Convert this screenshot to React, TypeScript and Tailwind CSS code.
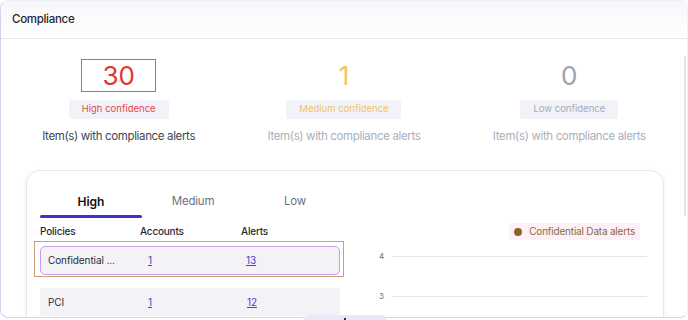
import React from "react";

const stats = [
  { n: "30", label: "High confidence", numCls: "text-[#e2352f]", boxed: true, badgeCls: "text-[#e8474a] w-[100px]", capCls: "text-[#3d4657]" },
  { n: "1", label: "Medium confidence", numCls: "text-[#f2c55c]", boxed: false, badgeCls: "text-[#eec46a] w-[115px]", capCls: "text-[#a9b0bc]" },
  { n: "0", label: "Low confidence", numCls: "text-[#9aa3b2]", boxed: false, badgeCls: "text-[#a3abb8] w-[98px]", capCls: "text-[#a9b0bc]" },
];

export default function App() {
  return (
    <div className="relative w-[688px] h-[320px] overflow-hidden bg-white" style={{ fontFamily: "Inter, 'Noto Sans', sans-serif" }}>
      <div className="relative h-[318px] rounded-[8px] border border-[#d6d2f0] border-t-[#efeef6] border-r-[#f1f1f5] bg-white overflow-hidden">
        <div className="h-[38px] flex items-center px-[11px] border-b border-[#e4e6eb] bg-gradient-to-b from-[#f7f7fa] to-white">
          <span className="text-[11.5px] tracking-[-0.3px] font-medium text-[#1f2430]">Compliance</span>
        </div>
        <div className="grid grid-cols-3 px-[5px] pt-[20px]">
          {stats.map((s) => (
            <div key={s.label} className="flex flex-col items-center">
              {s.boxed ? (
                <div className="h-[33px] w-[75px] p-px bg-[#f2505d]">
                  <div className="h-full w-full bg-white flex items-center justify-center">
                    <span className={"text-[26px] leading-none " + s.numCls}>{s.n}</span>
                  </div>
                </div>
              ) : (
                <div className="h-[33px] w-[75px] flex items-center justify-center">
                  <span className={"text-[26px] leading-none " + s.numCls}>{s.n}</span>
                </div>
              )}
              <div className={"mt-[8px] h-[19px] flex items-center justify-center bg-[#f1f3f8] rounded-[2px] text-[9.5px] " + s.badgeCls}>
                {s.label}
              </div>
              <div className={"mt-[9px] text-[11.5px] tracking-[-0.35px] leading-[16px] " + s.capCls}>Item(s) with compliance alerts</div>
            </div>
          ))}
        </div>
        <div className="ml-[25px] mt-[26px] w-[638px] h-[200px] rounded-[14px] border border-[#e6e6ef] shadow-[0_1px_4px_rgba(120,120,160,0.12)] bg-white flex">
          <div className="pl-[13px] pt-[17px] w-[325px]">
            <div className="flex">
              <div className="w-[102px] h-[27px] flex items-center justify-center text-[12px] font-semibold text-[#111]">High</div>
              <div className="w-[102px] h-[27px] flex items-center justify-center text-[11.5px] tracking-[-0.2px] text-[#6b7280]">Medium</div>
              <div className="w-[102px] h-[27px] flex items-center justify-center text-[11.5px] tracking-[-0.2px] text-[#6b7280]">Low</div>
            </div>
            <div className="w-[102px] h-[3px] rounded-full bg-[#3b2fd8]"></div>
            <div className="flex mt-[4px] h-[18px] items-center text-[10px] tracking-[-0.2px] font-medium text-[#1f2937]">
              <div className="w-[100px]">Policies</div>
              <div className="w-[101px]">Accounts</div>
              <div>Alerts</div>
            </div>
            <div className="-ml-[6px] mt-[1px] w-[310px] h-[36px] border border-[#c9a07e] pl-[5px] pt-[4px]">
              <div className="w-[300px] h-[29px] rounded-[5px] border border-[#c79ee6] bg-[#f2f2f7] flex items-center text-[10px] tracking-[-0.1px] text-[#2b2f38]">
                <div className="w-[100px] pl-[7px]">Confidential ...</div>
                <div className="w-[99px] pl-[7px]"><span className="underline text-[#4b3fd0]">1</span></div>
                <div className="pl-[6px]"><span className="underline text-[#4b3fd0]">13</span></div>
              </div>
            </div>
            <div className="mt-[11px] w-[300px] h-[28px] rounded-[3px] bg-[#f2f2f7] flex items-center text-[10px] tracking-[-0.1px] text-[#2b2f38]">
              <div className="w-[100px] pl-[8px]">PCI</div>
              <div className="w-[100px] pl-[8px]"><span className="underline text-[#4b3fd0]">1</span></div>
              <div className="pl-[7px]"><span className="underline text-[#4b3fd0]">12</span></div>
            </div>
          </div>
          <div className="flex-1 pt-[52px] pr-[16px]">
            <div className="flex justify-end pr-[7px]">
              <div className="h-[17px] px-[5px] bg-[#fdf0f7] flex items-center gap-[7px] text-[10px] tracking-[-0.2px] text-[#8a6b3e]">
                <span className="w-[8px] h-[8px] rounded-full bg-[#8a6428]"></span>
                Confidential Data alerts
              </div>
            </div>
            <div className="mt-[8px] flex items-center h-[16px]">
              <span className="w-[40px] pl-[27px] text-[8px] text-[#6b7280]">4</span>
              <div className="flex-1 h-px bg-[#e4e6ee]"></div>
            </div>
            <div className="mt-[24px] flex items-center h-[16px]">
              <span className="w-[40px] pl-[27px] text-[8px] text-[#6b7280]">3</span>
              <div className="flex-1 h-px bg-[#e4e6ee]"></div>
            </div>
          </div>
        </div>
        <div className="absolute right-[1px] top-[55px] w-[2px] h-[160px] bg-[#e2e3e8] rounded"></div>
      </div>
      <div className="absolute left-[303px] top-[315px] w-[84px] h-[6px] rounded-t-full bg-[#ebe8f8]"></div>
      <div className="absolute left-[344px] top-[318px] w-[2px] h-[2px] bg-[#2a2a6a]"></div>
    </div>
  );
}
